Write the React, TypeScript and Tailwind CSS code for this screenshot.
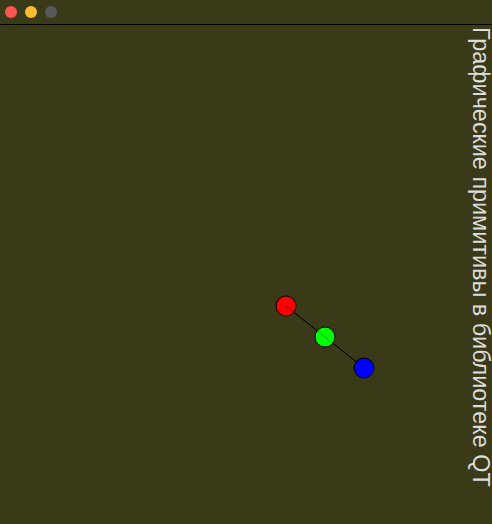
import React from 'react';

const dots = [
  { x: 286, y: 306, fill: '#ff0000' },
  { x: 325, y: 337, fill: '#00ff00' },
  { x: 364, y: 368, fill: '#0000ff' },
];

const App: React.FC = () => {
  return (
    <div className="w-[492px] h-[524px] bg-[#3a3918] flex flex-col overflow-hidden font-['Liberation_Sans',sans-serif]">
      {/* Title bar */}
      <div className="h-[25px] shrink-0 border-b border-black flex items-center gap-[8px] pl-[5px]">
        <span className="w-[12px] h-[12px] rounded-full bg-[#fc5753]" />
        <span className="w-[12px] h-[12px] rounded-full bg-[#fdbc2e]" />
        <span className="w-[12px] h-[12px] rounded-full bg-[#58585a]" />
      </div>

      {/* Canvas */}
      <div className="relative flex-1 flex justify-end">
        <svg className="absolute left-0 top-[-25px]" width="492" height="524">
          <line x1="286" y1="306" x2="364" y2="368" stroke="#000" strokeWidth="1" />
          {dots.map((d) => (
            <circle key={d.x} cx={d.x} cy={d.y} r="10" fill={d.fill} stroke="#000" strokeWidth="1" />
          ))}
          <line x1="286" y1="306" x2="364" y2="368" stroke="#000" strokeWidth="0.6" opacity="0.6" />
        </svg>
        <div className="[writing-mode:vertical-rl] text-[#dcdcdc] text-[23.4px] leading-none pt-[2px] whitespace-nowrap">
          Графические примитивы в библиотеке QT
        </div>
      </div>
    </div>
  );
};

export default App;
